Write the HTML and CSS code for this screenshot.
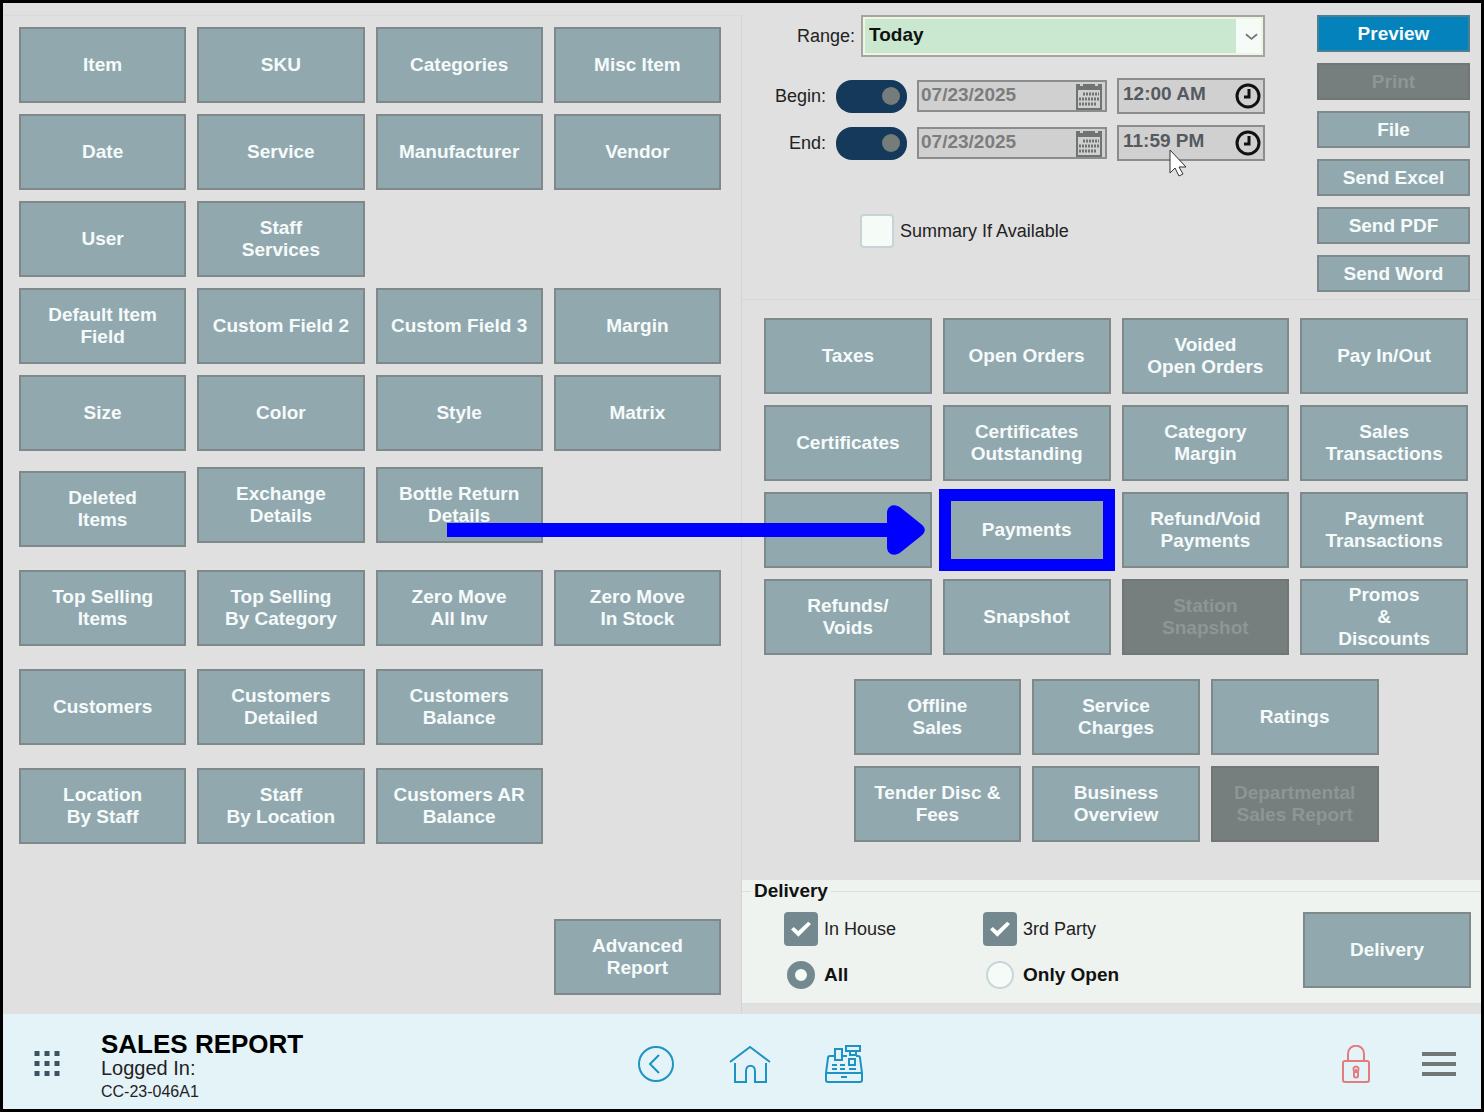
FILE: index.html
```html
<!DOCTYPE html>
<html lang="en">
<head>
  <meta charset="UTF-8" />
  <meta name="viewport" content="width=device-width, initial-scale=1.0" />
  <title>Sales Report</title>
  <link rel="stylesheet" href="styles.css">
</head>
<body>
  <main class="content">
    <section class="panel-left">
      <div class="tile-grid">
        <button class="tile">Item</button>
        <button class="tile">SKU</button>
        <button class="tile">Categories</button>
        <button class="tile">Misc Item</button>
        <button class="tile">Date</button>
        <button class="tile">Service</button>
        <button class="tile">Manufacturer</button>
        <button class="tile">Vendor</button>
        <button class="tile">User</button>
        <button class="tile">Staff<br>Services</button>
        <button class="tile row-start">Default Item<br>Field</button>
        <button class="tile">Custom Field 2</button>
        <button class="tile">Custom Field 3</button>
        <button class="tile">Margin</button>
        <button class="tile">Size</button>
        <button class="tile">Color</button>
        <button class="tile">Style</button>
        <button class="tile">Matrix</button>
      </div>

      <div class="tile-grid details-row">
        <button class="tile">Deleted<br>Items</button>
        <button class="tile">Exchange<br>Details</button>
        <button class="tile">Bottle Return<br>Details</button>
      </div>

      <div class="tile-grid spaced">
        <button class="tile">Top Selling<br>Items</button>
        <button class="tile">Top Selling<br>By Category</button>
        <button class="tile">Zero Move<br>All Inv</button>
        <button class="tile">Zero Move<br>In Stock</button>
        <button class="tile row-start">Customers</button>
        <button class="tile">Customers<br>Detailed</button>
        <button class="tile">Customers<br>Balance</button>
        <button class="tile row-start">Location<br>By Staff</button>
        <button class="tile">Staff<br>By Location</button>
        <button class="tile">Customers AR<br>Balance</button>
      </div>

      <div class="tile-grid advanced">
        <button class="tile last-col">Advanced<br>Report</button>
      </div>
    </section>

    <section class="panel-right">
      <div class="filters">
        <form class="filter-form">
          <div class="filter-row range-row">
            <label for="range">Range:</label>
            <div class="select-box">
              <select id="range">
                <option>Today</option>
              </select>
              <svg class="chevron" viewBox="0 0 14 8"><path d="M1 1l6 5 6-5" /></svg>
            </div>
          </div>

          <div class="filter-row">
            <label for="beginDate">Begin:</label>
            <input class="toggle" type="checkbox" aria-label="Use begin date" checked>
            <div class="field date">
              <input type="text" id="beginDate" value="07/23/2025" readonly>
              <svg class="calendar" viewBox="0 0 28 28">
                <path class="fill" d="M1 2h4v2h3V2h12v2h3V2h4v6H1z" />
                <path class="line" d="M2 3v24h24V3" />
                <path class="dots" d="M8 12h16M4 17h20M4 22h17" />
              </svg>
            </div>
            <div class="field time">
              <input type="text" aria-label="Begin time" value="12:00 AM" readonly>
              <svg class="clock" viewBox="0 0 26 26"><circle cx="13" cy="13" r="11" /><path d="M14 6v8H9" /></svg>
            </div>
          </div>

          <div class="filter-row">
            <label for="endDate">End:</label>
            <input class="toggle" type="checkbox" aria-label="Use end date" checked>
            <div class="field date">
              <input type="text" id="endDate" value="07/23/2025" readonly>
              <svg class="calendar" viewBox="0 0 28 28">
                <path class="fill" d="M1 2h4v2h3V2h12v2h3V2h4v6H1z" />
                <path class="line" d="M2 3v24h24V3" />
                <path class="dots" d="M8 12h16M4 17h20M4 22h17" />
              </svg>
            </div>
            <div class="field time">
              <input type="text" aria-label="End time" value="11:59 PM" readonly>
              <svg class="clock" viewBox="0 0 26 26"><circle cx="13" cy="13" r="11" /><path d="M14 6v8H9" /></svg>
              <svg class="cursor" viewBox="0 0 18 28"><path d="M1 1v23l5-5 4 8 4-2-4-7h7z" /></svg>
            </div>
          </div>

          <div class="filter-row summary-row">
            <div class="summary">
              <input class="check" type="checkbox" id="summary">
              <label for="summary">Summary If Available</label>
            </div>
          </div>
        </form>

        <div class="actions">
          <button class="action primary">Preview</button>
          <button class="action" disabled>Print</button>
          <button class="action">File</button>
          <button class="action">Send Excel</button>
          <button class="action">Send PDF</button>
          <button class="action">Send Word</button>
        </div>
      </div>

      <div class="reports">
        <div class="tile-grid">
          <button class="tile">Taxes</button>
          <button class="tile">Open Orders</button>
          <button class="tile">Voided<br>Open Orders</button>
          <button class="tile">Pay In/Out</button>
          <button class="tile">Certificates</button>
          <button class="tile">Certificates<br>Outstanding</button>
          <button class="tile">Category<br>Margin</button>
          <button class="tile">Sales<br>Transactions</button>
          <button class="tile">Settlement</button>
          <div class="callout">
            <button class="tile">Payments</button>
            <svg class="arrow" viewBox="0 0 478 50">
              <path d="M0 18h440v14H0z" />
              <path d="M440 8C440 0 448-2 454 3L474 19C479 23 479 27 474 31L454 47C448 52 440 50 440 42z" />
            </svg>
          </div>
          <button class="tile">Refund/Void<br>Payments</button>
          <button class="tile">Payment<br>Transactions</button>
          <button class="tile">Refunds/<br>Voids</button>
          <button class="tile">Snapshot</button>
          <button class="tile" disabled>Station<br>Snapshot</button>
          <button class="tile">Promos<br>&amp;<br>Discounts</button>
        </div>

        <div class="tile-grid three">
          <button class="tile">Offline<br>Sales</button>
          <button class="tile">Service<br>Charges</button>
          <button class="tile">Ratings</button>
          <button class="tile">Tender Disc &amp;<br>Fees</button>
          <button class="tile">Business<br>Overview</button>
          <button class="tile" disabled>Departmental<br>Sales Report</button>
        </div>
      </div>

      <div class="delivery">
        <fieldset>
          <legend>Delivery</legend>
          <div class="delivery-body">
            <div class="options">
              <div class="option">
                <input class="check" type="checkbox" id="inHouse" checked>
                <label for="inHouse">In House</label>
              </div>
              <div class="option">
                <input class="check" type="checkbox" id="thirdParty" checked>
                <label for="thirdParty">3rd Party</label>
              </div>
              <div class="option strong">
                <input class="radio" type="radio" name="status" id="all" checked>
                <label for="all">All</label>
              </div>
              <div class="option strong">
                <input class="radio" type="radio" name="status" id="onlyOpen">
                <label for="onlyOpen">Only Open</label>
              </div>
            </div>
            <button class="tile">Delivery</button>
          </div>
        </fieldset>
      </div>
    </section>
  </main>

  <footer class="footer">
    <div class="footer-left">
      <button class="icon-btn" aria-label="Apps">
        <svg class="apps" viewBox="0 0 26 26">
          <path d="M3 0v26M13 0v26M23 0v26" />
        </svg>
      </button>
      <div class="titles">
        <h1>SALES REPORT</h1>
        <p>Logged In:</p>
        <p class="station">CC-23-046A1</p>
      </div>
    </div>

    <nav class="footer-nav">
      <button class="icon-btn" aria-label="Back">
        <svg class="nav-icon" width="38" height="38" viewBox="0 0 38 38">
          <circle cx="19" cy="19" r="17" /><path d="M22 10l-9 9 9 9" />
        </svg>
      </button>
      <button class="icon-btn" aria-label="Home">
        <svg class="nav-icon" width="42" height="38" viewBox="0 0 42 38">
          <path d="M1 17L21 2l20 15M6 18v19h11V26c0-7 9-7 9 0v11h11V18" />
        </svg>
      </button>
      <button class="icon-btn" aria-label="Register">
        <svg class="nav-icon" width="38" height="38" viewBox="0 0 38 38">
          <path d="M10 11H5q-2 0-2 2L1 28v7q0 2 2 2h32q2 0 2-2v-7l-2-15q0-2-2-2h-2M1 28h36M17 11h5" />
          <path d="M10 4h7v11h-7zM21 1h14v5H21zM25 6v4h6V6M24 14h6v6h-6z" />
          <path d="M7 20h5M15 20h5M7 24h5M15 24h5M24 24h7M16 32h6" />
        </svg>
      </button>
    </nav>

    <div class="footer-right">
      <button class="icon-btn" aria-label="Lock">
        <svg class="lock" width="28" height="38" viewBox="0 0 28 38">
          <rect x="1" y="16" width="26" height="21" rx="2" />
          <path d="M6 16V9C6-2 22-2 22 9v7" />
          <path d="M12 26c-3-6 7-6 4 0v5c0 2-4 2-4 0zM14 24v4" />
        </svg>
      </button>
      <button class="icon-btn menu" aria-label="Menu">
        <svg class="bars" width="34" height="26" viewBox="0 0 34 26"><path d="M0 3h34M0 13h34M0 23h34" /></svg>
      </button>
    </div>
  </footer>
</body>
</html>
```

FILE: styles.css
```css
* {
  margin: 0;
  padding: 0;
  box-sizing: border-box;
  font-family: "Liberation Sans", Arial, sans-serif;
}

body {
  min-height: 100vh;
  display: flex;
  flex-direction: column;
  border: 3px solid #000;
  background: #e0e0e0;
  color: #222;
  font-size: 18px;
  line-height: 22px;
}

button {
  cursor: pointer;
}

.content {
  flex: 1;
  display: grid;
  grid-template-columns: 1fr 1fr;
}

/* Report tiles */
.tile-grid {
  display: grid;
  grid-template-columns: repeat(4, 1fr);
  gap: 11px;
}

.tile,
.action {
  width: 100%;
  border: 2px solid #7f898a;
  background: #92a8af;
  color: #f5fbfa;
  font-size: 19px;
  font-weight: bold;
  line-height: 22px;
}

.tile {
  height: 76px;
}

.tile:disabled,
.action:disabled {
  background: #767e7e;
  border-color: #717777;
  color: #8f9594;
  cursor: default;
}

.row-start {
  grid-column-start: 1;
}

.last-col {
  grid-column-start: 4;
}

.panel-left {
  display: flex;
  flex-direction: column;
  margin-top: 12px;
  padding: 11px 20px 19px 16px;
  border-top: 1px solid #d9d9d9;
  border-right: 1px solid #d4d4d4;
}

.details-row {
  margin-top: 16px;
  height: 80px;
}

.details-row .tile:first-child {
  align-self: end;
}

.spaced {
  margin-top: 23px;
  row-gap: 23px;
}

.advanced {
  margin-top: auto;
}

/* Filters */
.panel-right {
  display: flex;
  flex-direction: column;
}

.filters {
  display: flex;
  gap: 52px;
  height: 297px;
  padding: 12px 11px 0 20px;
  border-bottom: 1px solid #d6d6d6;
}

.filter-form {
  flex: 1;
  display: flex;
  flex-direction: column;
  gap: 11px;
}

.filter-row {
  display: flex;
  justify-content: flex-end;
  align-items: center;
  gap: 10px;
  height: 36px;
}

.range-row {
  gap: 6px;
  height: 42px;
  margin-bottom: 10px;
}

.select-box {
  position: relative;
  width: 404px;
  height: 42px;
}

.select-box select {
  appearance: none;
  width: 100%;
  height: 100%;
  padding: 0 0 3px 6px;
  border: 2px solid #a3a5a5;
  border-radius: 0;
  box-shadow: inset 0 0 0 2px #f0f5e0;
  background: linear-gradient(to right, #cae8d0 calc(100% - 27px), #f5fcf8 0);
  color: #111;
  font-size: 19px;
  font-weight: bold;
}

.chevron {
  position: absolute;
  top: 18px;
  right: 7px;
  width: 13px;
  height: 8px;
  fill: none;
  stroke: #777;
  stroke-width: 2;
  pointer-events: none;
}

.toggle {
  appearance: none;
  display: flex;
  justify-content: flex-end;
  align-items: center;
  width: 71px;
  height: 33px;
  padding-right: 7px;
  border-radius: 16px;
  background: #14395a;
}

.toggle::before {
  content: "";
  width: 18px;
  height: 18px;
  border-radius: 50%;
  background: #767c7a;
}

.field {
  position: relative;
  display: flex;
  align-items: center;
  border: 2px solid #8b8d8d;
  background: #d0d0d0;
}

.field input {
  flex: 1;
  min-width: 0;
  height: 100%;
  border: none;
  outline: none;
  background: transparent;
  color: #7b7d7d;
  font-size: 19px;
  font-weight: bold;
}

.date {
  width: 190px;
  height: 32px;
}

.date input {
  padding: 0 0 2px 2px;
}

.time {
  width: 148px;
  height: 36px;
}

.time input {
  padding: 0 0 5px 4px;
  color: #555960;
}

.calendar {
  width: 28px;
  height: 28px;
  margin-right: 2px;
  fill: none;
  stroke: #6f7372;
  stroke-width: 2;
}

.calendar .fill {
  fill: #6f7372;
  stroke: none;
}

.calendar .dots {
  stroke-width: 3;
  stroke-dasharray: 2 1;
}

.clock {
  width: 26px;
  height: 26px;
  margin-right: 2px;
  fill: none;
  stroke: #111;
  stroke-width: 3;
}

.cursor {
  position: absolute;
  top: 22px;
  left: 50px;
  width: 18px;
  height: 28px;
  fill: #fff;
  stroke: #333;
  stroke-width: 1;
  pointer-events: none;
}

.summary-row {
  margin-top: 41px;
}

.summary {
  display: flex;
  align-items: center;
  gap: 6px;
  width: 405px;
}

.check {
  appearance: none;
  width: 34px;
  height: 34px;
  border: 2px solid #c8d3d8;
  border-radius: 4px;
  background: #f5fcf8;
}

.check:checked {
  display: grid;
  place-items: center;
  border-color: #74898f;
  background: #74898f;
}

.check:checked::before {
  content: "";
  width: 20px;
  height: 16px;
  background: #fff;
  clip-path: polygon(0 53%, 14% 38%, 36% 62%, 86% 4%, 100% 18%, 37% 98%);
}

.actions {
  display: flex;
  flex-direction: column;
  gap: 11px;
  width: 153px;
}

.action {
  height: 37px;
}

.primary {
  background: #0482bb;
  border-color: #4d7f94;
}

/* Right hand reports */
.reports {
  flex: 1;
  padding: 18px 13px 38px 22px;
}

.three {
  grid-template-columns: repeat(3, 1fr);
  width: 525px;
  margin: 24px auto 0;
}

.callout {
  position: relative;
}

.callout::after {
  content: "";
  position: absolute;
  inset: -3px -4px;
  border: 12px solid #00f;
  pointer-events: none;
}

.arrow {
  position: absolute;
  top: 13px;
  right: calc(100% + 18px);
  width: 478px;
  height: 50px;
  fill: #00f;
  pointer-events: none;
}

/* Delivery */
.delivery {
  margin-bottom: 10px;
  background: #eef3ef;
}

.delivery fieldset {
  border: solid #dbdedb;
  border-width: 1px 0;
  padding: 10px 10px 11px 42px;
}

.delivery legend {
  margin-left: -33px;
  padding: 0 3px;
  color: #111;
  font-size: 19px;
  font-weight: bold;
}

.delivery-body {
  display: flex;
  justify-content: space-between;
}

.delivery-body .tile {
  width: 168px;
}

.options {
  display: grid;
  grid-template-columns: 199px auto;
  row-gap: 12px;
}

.option {
  display: flex;
  align-items: center;
  gap: 6px;
  height: 34px;
}

.strong {
  color: #111;
  font-size: 19px;
  font-weight: bold;
}

.radio {
  appearance: none;
  width: 28px;
  height: 28px;
  margin: 0 3px;
  border: 2px solid #c8d6d9;
  border-radius: 50%;
  background: #f5fcf8;
}

.radio:checked {
  border: 8px solid #74898f;
}

/* Footer */
.footer {
  display: grid;
  grid-template-columns: 1fr auto 1fr;
  align-items: center;
  height: 95px;
  padding: 5px 15px 0 31px;
  background: #e4f3f8;
}

.icon-btn {
  display: flex;
  border: none;
  background: none;
}

.icon-btn svg {
  fill: none;
}

.footer-left {
  display: flex;
  align-items: center;
  gap: 41px;
}

.apps {
  width: 26px;
  height: 26px;
  stroke: #3c5261;
  stroke-width: 5;
  stroke-dasharray: 5 5;
}

.titles {
  padding-top: 7px;
  color: #222;
}

.titles h1 {
  color: #000;
  font-size: 26px;
  line-height: 26px;
}

.titles p {
  font-size: 20px;
  line-height: 22px;
}

.titles .station {
  font-size: 16px;
  line-height: 26px;
}

.footer-nav {
  display: flex;
  align-items: center;
  gap: 54px;
}

.nav-icon {
  stroke: #1c93c4;
  stroke-width: 2;
}

.footer-right {
  display: flex;
  justify-content: flex-end;
  align-items: center;
  gap: 42px;
}

.menu {
  padding: 0 10px;
}

.lock {
  stroke: #e37d7d;
  stroke-width: 2;
}

.bars {
  stroke: #707877;
  stroke-width: 4;
}
```
